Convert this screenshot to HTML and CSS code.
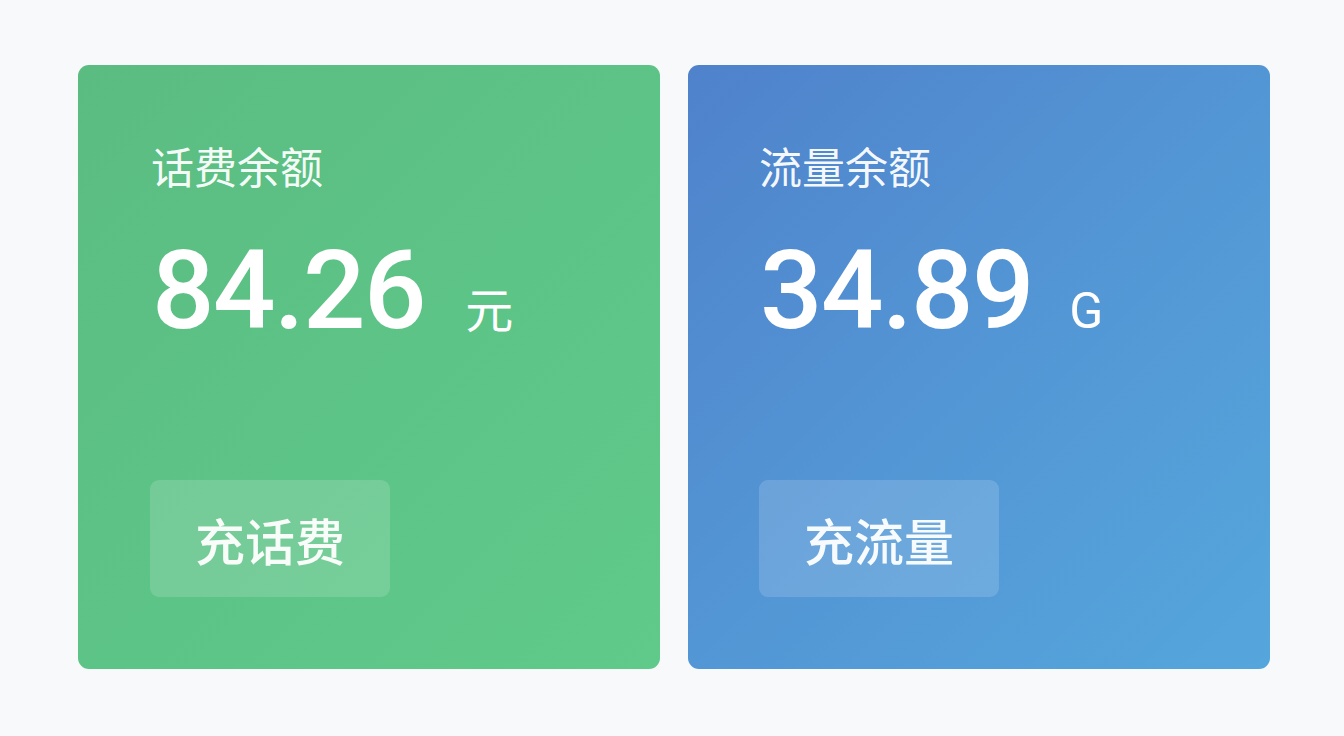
FILE: index.html
```html
<!DOCTYPE html>
<html lang="zh-CN">
<head>
<meta charset="utf-8">
<title>余额</title>
<link rel="stylesheet" href="styles.css">
</head>
<body>
<main class="page">
  <section class="card card-green">
    <div class="card-title">话费余额</div>
    <div class="amount">
      <span class="amount-value">84.26</span>
      <span class="amount-unit unit-cjk">元</span>
    </div>
    <div class="action">充话费</div>
  </section>
  <section class="card card-blue">
    <div class="card-title">流量余额</div>
    <div class="amount">
      <span class="amount-value">34.89</span>
      <span class="amount-unit unit-latin">G</span>
    </div>
    <div class="action">充流量</div>
  </section>
</main>
</body>
</html>
```

FILE: styles.css
```css
html, body {
  margin: 0;
  padding: 0;
}
body {
  background: #f8f9fa;
  width: 1344px;
  height: 736px;
  overflow: hidden;
  font-family: "Noto Sans", "Noto Sans CJK SC", sans-serif;
  color: #ffffff;
}
.page {
  display: flex;
  gap: 28px;
  padding: 65px 0 0 78px;
}
.card {
  width: 582px;
  height: 604px;
  box-sizing: border-box;
  border-radius: 11px;
  padding: 79px 0 72px 74px;
  display: flex;
  flex-direction: column;
  align-items: flex-start;
}
.card-green {
  background: linear-gradient(135deg, #5bbc81 0%, #5dc487 55%, #5fca8a 100%);
}
.card-blue {
  background: linear-gradient(135deg, #4f82cb 0%, #5396d5 50%, #55a6dc 100%);
  padding-left: 72px;
}
.card-title {
  font-family: "Noto Sans CJK SC", sans-serif;
  font-size: 43px;
  line-height: 43px;
  color: rgba(255, 255, 255, 0.96);
  margin-left: -1px;
}
.amount {
  display: flex;
  align-items: baseline;
  margin-top: 49px;
  line-height: 1;
}
.amount-value {
  font-family: "Roboto", "Noto Sans", sans-serif;
  font-size: 110px;
  font-weight: 500;
  line-height: 109px;
  letter-spacing: -1.5px;
}
.unit-cjk {
  font-family: "Noto Sans CJK SC", sans-serif;
  font-size: 48px;
  margin-left: 40px;
}
.unit-latin {
  font-family: "Roboto", "Noto Sans", sans-serif;
  font-size: 50px;
  font-weight: 400;
  margin-left: 36px;
}
.action {
  margin-top: auto;
  width: 240px;
  height: 117px;
  border-radius: 9px;
  background: rgba(255, 255, 255, 0.15);
  display: flex;
  align-items: center;
  justify-content: center;
  font-family: "Noto Sans CJK SC", sans-serif;
  font-size: 50px;
  font-weight: 500;
  color: rgba(255, 255, 255, 0.95);
  margin-left: -2px;
}
.card-blue .action {
  margin-left: -1px;
}
```
